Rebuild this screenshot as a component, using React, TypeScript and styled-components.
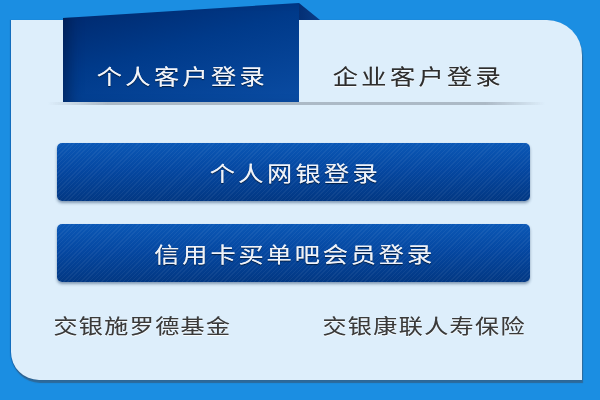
import React from "react";
import styled, { createGlobalStyle } from "styled-components";

const Global = createGlobalStyle`
  html, body {
    margin: 0;
    padding: 0;
    background: #1b8ee2;
  }
  body {
    font-family: "Noto Sans CJK SC", "Noto Sans", sans-serif;
  }
`;

const Page = styled.div`
  width: 600px;
  height: 400px;
  box-sizing: border-box;
  padding: 20px 0 0 11px;
  background: #1b8ee2;
  overflow: hidden;
`;

const Panel = styled.div`
  width: 571px;
  height: 360px;
  box-sizing: border-box;
  background: #ddeefb;
  border-radius: 0 35px 0 28px;
  box-shadow: 1px 3px 1px rgba(60, 75, 95, 0.55), -1px 0 1px rgba(0, 40, 110, 0.35);
  display: flex;
  flex-direction: column;
`;

const TabRow = styled.div`
  display: flex;
  margin-top: -17px;
  padding-left: 52px;
`;

const Label = styled.span<{ $scale?: number; $ls?: number; $size?: number; $origin?: string }>`
  display: inline-block;
  font-size: ${(p) => p.$size ?? 21}px;
  letter-spacing: ${(p) => p.$ls ?? 2.8}px;
  padding-left: ${(p) => p.$ls ?? 2.8}px;
  transform: scaleX(${(p) => p.$scale ?? 1.2});
  transform-origin: ${(p) => p.$origin ?? "center"};
  white-space: nowrap;
`;

const Tab = styled.div<{ $active?: boolean }>`
  position: relative;
  width: 236px;
  height: 99px;
  box-sizing: border-box;
  padding-top: 59px;
  text-align: center;
  line-height: 26px;
  color: ${(p) => (p.$active ? "#f2f5fb" : "#2e2e2e")};
  text-shadow: ${(p) =>
    p.$active
      ? "0 1px 1px rgba(0,0,0,0.6), 0 0 0.4px #fff"
      : "0 1px 1px rgba(255,255,255,0.9), 0 0 0.5px rgba(0,0,0,0.6)"};
  background: ${(p) =>
    p.$active
      ? "linear-gradient(165deg, #00276a 0%, #003a8a 45%, #0a4ca3 100%)"
      : "transparent"};
  clip-path: ${(p) => (p.$active ? "polygon(0 15px, 100% 0, 100% 100%, 0 100%)" : "none")};
  ${(p) => (p.$active ? "box-shadow: inset 14px 0 14px -8px rgba(0,20,60,0.5);" : "")}
`;

const TabWrap = styled.div`
  position: relative;
  &::after {
    content: "";
    position: absolute;
    left: 236px;
    top: 0;
    width: 21px;
    height: 17px;
    background: linear-gradient(90deg, #042f74, #0a3d88);
    clip-path: polygon(0 0, 100% 100%, 0 100%);
  }
`;

const Divider = styled.div`
  height: 3px;
  margin: 0 37px;
  background: linear-gradient(
    90deg,
    rgba(160, 172, 185, 0) 0%,
    rgba(160, 172, 185, 0.8) 12%,
    rgba(160, 172, 185, 0.8) 88%,
    rgba(160, 172, 185, 0) 100%
  );
  filter: blur(0.6px);
`;

const Buttons = styled.div`
  display: flex;
  flex-direction: column;
  gap: 23px;
  margin: 38px 0 0 46px;
  width: 473px;
`;

const LoginButton = styled.div`
  height: 58px;
  border-radius: 5px;
  display: flex;
  align-items: center;
  justify-content: center;
  color: #eef3fb;
  text-shadow: 0 1px 1px rgba(0, 0, 0, 0.6), 0 0 0.4px #fff;
  background:
    repeating-linear-gradient(
      135deg,
      rgba(255, 255, 255, 0.05) 0px,
      rgba(255, 255, 255, 0.05) 1px,
      rgba(0, 0, 0, 0) 1px,
      rgba(0, 0, 0, 0) 3px
    ),
    linear-gradient(180deg, #0b58b6 0%, #0548a2 45%, #023883 100%);
  box-shadow: 0 2px 3px rgba(20, 50, 90, 0.45);
`;

const Links = styled.div`
  display: flex;
  margin: 31px 0 0 41px;
`;

const LinkItem = styled.div<{ $width: number }>`
  width: ${(p) => p.$width}px;
  line-height: 26px;
  color: #3a3a3a;
  text-shadow: 0 1px 0 rgba(255, 255, 255, 0.8), 0 0 0.5px rgba(0, 0, 0, 0.5);
  white-space: nowrap;
`;

export default function App() {
  return (
    <>
      <Global />
      <Page>
        <Panel>
          <TabRow>
            <TabWrap>
              <Tab $active>
                <Label>个人客户登录</Label>
              </Tab>
            </TabWrap>
            <Tab>
              <Label>企业客户登录</Label>
            </Tab>
          </TabRow>
          <Divider />
          <Buttons>
            <LoginButton>
              <Label>个人网银登录</Label>
            </LoginButton>
            <LoginButton>
              <Label $ls={2.4}>信用卡买单吧会员登录</Label>
            </LoginButton>
          </Buttons>
          <Links>
            <LinkItem $width={269}>
              <Label $size={20} $ls={1.2} $origin="left">交银施罗德基金</Label>
            </LinkItem>
            <LinkItem $width={230}>
              <Label $size={20} $ls={1.2} $origin="left">交银康联人寿保险</Label>
            </LinkItem>
          </Links>
        </Panel>
      </Page>
    </>
  );
}
